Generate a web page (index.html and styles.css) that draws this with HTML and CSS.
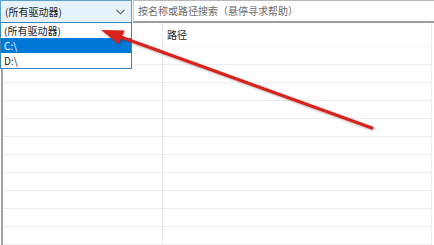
FILE: index.html
```html
<!DOCTYPE html>
<html lang="zh-CN">
<head>
<meta charset="utf-8">
<link rel="stylesheet" href="styles.css">
</head>
<body>
<div class="app">
  <div class="toolbar">
    <div class="combo">
      <span class="combo-text">(所有驱动器)</span>
      <svg class="chev" width="9" height="6" viewBox="0 0 9 6"><path d="M0.5 0.8 L4.5 4.8 L8.5 0.8" fill="none" stroke="#555" stroke-width="1.1"/></svg>
    </div>
    <div class="search">按名称或路径搜索（悬停寻求帮助）</div>
  </div>
  <div class="table">
    <div class="head">
      <div class="c1"></div>
      <div class="c2">路径</div>
    </div>
    <div class="row"><div class="c1"></div><div class="c2"></div></div>
    <div class="row"><div class="c1"></div><div class="c2"></div></div>
    <div class="row"><div class="c1"></div><div class="c2"></div></div>
    <div class="row"><div class="c1"></div><div class="c2"></div></div>
    <div class="row"><div class="c1"></div><div class="c2"></div></div>
    <div class="row"><div class="c1"></div><div class="c2"></div></div>
    <div class="row"><div class="c1"></div><div class="c2"></div></div>
    <div class="row"><div class="c1"></div><div class="c2"></div></div>
    <div class="row"><div class="c1"></div><div class="c2"></div></div>
    <div class="row"><div class="c1"></div><div class="c2"></div></div>
    <div class="row"><div class="c1"></div><div class="c2"></div></div>
  </div>
  <ul class="dropdown">
    <li>(所有驱动器)</li>
    <li class="sel">C:\</li>
    <li>D:\</li>
  </ul>
  <svg class="arrow" width="434" height="245" viewBox="0 0 434 245">
    <defs>
      <filter id="sh" x="-10%" y="-10%" width="120%" height="120%">
        <feDropShadow dx="1" dy="1" stdDeviation="0.8" flood-color="#000" flood-opacity="0.35"/>
      </filter>
    </defs>
    <g filter="url(#sh)">
      <line x1="372" y1="128" x2="118" y2="36" stroke="#d8231c" stroke-width="3" stroke-linecap="round"/>
      <polygon points="101,30 124.5,30.5 118.5,44" fill="#d8231c"/>
    </g>
  </svg>
</div>
</body>
</html>
```

FILE: styles.css
```css
* { box-sizing: border-box; }
html, body { margin: 0; padding: 0; background: #fff; }
body {
  width: 434px;
  height: 245px;
  overflow: hidden;
  font-family: "Noto Sans CJK SC", "Noto Sans", sans-serif;
  font-size: 10px;
  color: #111;
}
.app { position: relative; width: 434px; height: 245px; }

.toolbar {
  display: flex;
  height: 23px;
  gap: 1px;
}
.combo {
  width: 132px;
  height: 23px;
  background: #e5f1fb;
  border: 1px solid #5a9fd8;
  display: flex;
  align-items: center;
  justify-content: space-between;
  padding: 0 6px 0 4px;
}
.combo-text { line-height: 20px; color: #1a1a1a; }
.search {
  flex: 1;
  height: 23px;
  border-top: 1px solid #b9b9b9;
  border-left: 1px solid #c8c8c8;
  border-bottom: 2px solid #9d9d9d;
  padding-left: 4px;
  line-height: 20px;
  color: #6a6a6a;
}

.table {
  border-left: 2px solid #a3a3a3;
  margin-left: 1px;
  border-right: 1px solid #ececec;
  margin-right: 2px;
  height: 222px;
  overflow: hidden;
}
.head, .row { display: flex; }
.head { height: 24px; border-bottom: 1px solid #f3f3f3; }
.row { height: 18px; border-bottom: 1px solid #ededed; }
.c1 { width: 160px; border-right: 1px solid #e8e8e8; }
.c2 { flex: 1; padding-left: 4px; }
.head .c2 { line-height: 24px; color: #1a1a1a; }

.dropdown {
  position: absolute;
  left: 0;
  top: 22px;
  width: 132px;
  margin: 0;
  padding: 0;
  list-style: none;
  background: #fff;
  border: 1px solid #3f86b8;
}
.dropdown li {
  height: 15px;
  line-height: 15px;
  padding-left: 3px;
  color: #1a1a1a;
}
.dropdown li.sel { background: #0078d7; color: #fff; }

.arrow { position: absolute; left: 0; top: 0; pointer-events: none; }
```
